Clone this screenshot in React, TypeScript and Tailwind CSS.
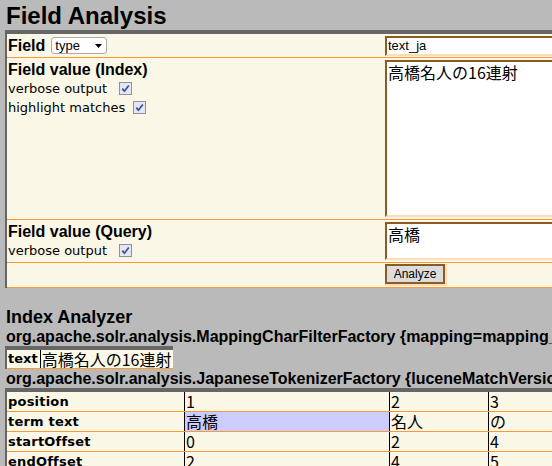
import React from 'react'

const Check = () => (
  <span className="inline-flex h-[13px] w-[13px] shrink-0 items-center justify-center border border-[#8e8fa6] bg-[#e4e6f1]">
    <svg width="9" height="9" viewBox="0 0 9 9">
      <path d="M1.3 4.6 L3.4 7.2 L7.8 1.4" stroke="#34519e" strokeWidth="1.7" fill="none" />
    </svg>
  </span>
)

const Option = ({ label, w }: { label: string; w: string }) => (
  <div className="flex h-[19px] items-center">
    <span className={`${w} font-['DejaVu_Sans',sans-serif] text-[13px]`}>{label}</span>
    <Check />
  </div>
)

const cols = ['w-[178px]', 'w-[205px]', 'w-[99px]', 'w-[100px]', 'w-[100px]', 'w-[100px]']

const rows: { label: string; cells: string[] }[] = [
  { label: 'position', cells: ['1', '2', '3', '4', '5'] },
  { label: 'term text', cells: ['高橋', '名人', 'の', '16', '連射'] },
  { label: 'startOffset', cells: ['0', '2', '4', '5', '7'] },
  { label: 'endOffset', cells: ['2', '4', '5', '7', '9'] },
  { label: 'type', cells: ['word', 'word', 'word', 'word', 'word'] },
]

export default function App() {
  return (
    <div className="h-[466px] w-[552px] overflow-hidden bg-[#bababa] font-['Liberation_Sans',Arial,sans-serif] text-black">
      <h1 className="pl-[6px] pt-[2px] text-[24px] font-bold leading-[28px]">Field Analysis</h1>

      {/* form */}
      <div className="ml-[5px] w-[760px] border-l-2 border-t-4 border-[#666666] bg-[#faf7e6]">
        <div className="flex border-b border-[#ff9933]">
          <div className="flex w-[378px] items-center pl-[1px]">
            <span className="text-[16px] font-bold leading-[18px]">Field</span>
            <div className="ml-[6px] flex h-[17px] w-[56px] items-center justify-between rounded-[3px] border border-[#a9a9a9] bg-white pl-[3px] pr-[4px]">
              <span className="text-[13px] leading-[15px]">type</span>
              <svg width="7" height="4" viewBox="0 0 7 4">
                <path d="M0 0 H7 L3.5 4 Z" fill="#000" />
              </svg>
            </div>
          </div>
          <div className="pb-[1px] pt-[2px]">
            <div className="h-[20px] w-[360px] border-2 border-b-[#ffdcb4] border-l-[#8c5a23] border-r-[#ffdcb4] border-t-[#8c5a23] bg-white pl-[1px] text-[13px] leading-[16px]">
              text_ja
            </div>
          </div>
        </div>

        <div className="flex border-b border-[#ff9933]">
          <div className="w-[378px] pl-[1px] pt-[2px]">
            <div className="text-[16px] font-bold leading-[19px]">Field value (Index)</div>
            <Option label="verbose output" w="w-[111px]" />
            <Option label="highlight matches" w="w-[125px]" />
          </div>
          <div className="py-[2px]">
            <div className="h-[157px] w-[360px] border-2 border-b-[#ffdcb4] border-l-[#8c5a23] border-r-[#ffdcb4] border-t-[#8c5a23] bg-white pl-[1px] pt-[1px] font-['Noto_Sans_CJK_JP',sans-serif] text-[16px] leading-[18px]">
              高橋名人の16連射
            </div>
          </div>
        </div>

        <div className="flex border-b border-[#ff9933]">
          <div className="w-[378px] pl-[1px] pt-[2px]">
            <div className="text-[16px] font-bold leading-[19px]">Field value (Query)</div>
            <Option label="verbose output" w="w-[111px]" />
          </div>
          <div className="py-[2px]">
            <div className="h-[38px] w-[360px] border-2 border-b-[#ffdcb4] border-l-[#8c5a23] border-r-[#ffdcb4] border-t-[#8c5a23] bg-white pl-[1px] pt-[1px] font-['Noto_Sans_CJK_JP',sans-serif] text-[16px] leading-[18px]">
              高橋
            </div>
          </div>
        </div>

        <div className="flex border-b border-[#ff9933]">
          <div className="w-[378px]" />
          <div className="py-[1px]">
            <div className="h-[22px] w-[62px] border-b-2 border-r-2 border-[#ffdcb4]">
              <button className="flex h-[20px] w-[60px] items-center justify-center border-2 border-[#8c5a23] bg-[#dcdcdc] text-[12px] leading-[14px]">
                Analyze
              </button>
            </div>
          </div>
        </div>
      </div>

      {/* index analyzer */}
      <div className="mt-[18px] whitespace-nowrap pl-[6px] text-[18px] font-bold leading-[22px]">Index Analyzer</div>
      <div className="whitespace-nowrap pl-[6px] text-[16px] font-bold leading-[18px]">
        org.apache.solr.analysis.MappingCharFilterFactory {'{'}mapping=mapping_ja.txt{'}'}
      </div>
      <div className="ml-[5px] flex w-fit border-l-2 border-t-4 border-[#666666]">
        <div className="flex border-b border-[#ff9933] bg-[#fdf9e8]">
          <div className="flex h-[18px] items-center border-r border-black pl-[1px] pr-[2px] font-['DejaVu_Sans',sans-serif] text-[13px] font-bold">
            text
          </div>
          <div className="h-[18px] pl-[1px] pr-[2px] font-['Noto_Sans_CJK_JP',sans-serif] text-[16px] leading-[18px]">
            高橋名人の16連射
          </div>
        </div>
      </div>
      <div className="whitespace-nowrap pl-[6px] pt-[1px] text-[16px] font-bold leading-[18px]">
        org.apache.solr.analysis.JapaneseTokenizerFactory {'{'}luceneMatchVersion=LUCENE_36, mode=search{'}'}
      </div>
      <div className="ml-[5px] w-[900px] border-l-2 border-t-4 border-[#666666] bg-[#faf7e6]">
        {rows.map((r) => (
          <div key={r.label} className="flex h-[20px] border-b border-[#ff9933]">
            <div className={`${cols[0]} flex items-center border-r border-black pl-[1px] font-['DejaVu_Sans',sans-serif] text-[13px] font-bold tracking-[0.2px]`}>
              {r.label}
            </div>
            {r.cells.map((c, i) => (
              <div
                key={i}
                className={`${cols[i + 1]} border-r border-black pl-[1px] font-['Noto_Sans_CJK_JP',sans-serif] text-[16px] leading-[19px] ${
                  r.label === 'term text' && i === 0 ? 'bg-[#ccccff]' : ''
                }`}
              >
                {c}
              </div>
            ))}
          </div>
        ))}
      </div>
    </div>
  )
}
